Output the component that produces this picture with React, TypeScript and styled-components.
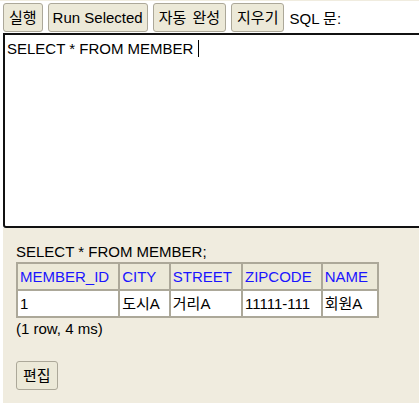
import React from "react";
import styled, { createGlobalStyle } from "styled-components";

const Global = createGlobalStyle`
  html, body { margin: 0; padding: 0; background: #fff; }
  body {
    font-family: "Liberation Sans", "Noto Sans CJK KR", Arial, sans-serif;
    font-size: 15px;
    color: #000;
    overflow: hidden;
  }
`;

const Page = styled.div`
  display: flex;
  flex-direction: column;
  width: 419px;
  height: 403px;
  overflow: hidden;
`;

const Toolbar = styled.div`
  display: flex;
  align-items: center;
  gap: 5px;
  height: 33px;
  padding: 1px 3px 0;
  border-top: 1px solid #f0ecdf;
  box-sizing: border-box;
`;

const Button = styled.button<{ $pad?: number; $ws?: number }>`
  height: 29px;
  padding: 0 ${(p) => p.$pad ?? 4}px;
  margin: 0;
  background: #ece9d8;
  border: 1px solid #aca899;
  border-radius: 3px;
  font-family: inherit;
  font-size: 15px;
  word-spacing: ${(p) => p.$ws ?? 0}px;
  color: #000;
  line-height: 1;
  cursor: pointer;
`;

const Label = styled.span`
  white-space: nowrap;
`;

const Editor = styled.div`
  margin-left: 3px;
  width: 430px;
  height: 195px;
  box-sizing: border-box;
  border: 2px solid #111;
  border-bottom-left-radius: 3px;
  padding: 5px 2px;
  white-space: pre;
  line-height: 17px;
`;

const Caret = styled.span`
  display: inline-block;
  width: 1px;
  height: 17px;
  background: #000;
  vertical-align: -3px;
`;

const Results = styled.div`
  flex: 1;
  margin-left: 3px;
  background: #f0ecdf;
  padding: 15px 13px 0;
`;

const Query = styled.div`
  line-height: 18px;
  margin-bottom: 1px;
`;

const Table = styled.table`
  border-collapse: separate;
  border-spacing: 0;
  border: 1px solid #aca899;
`;

const Th = styled.th`
  background: #ece9d8;
  color: #1a14ff;
  font-weight: normal;
  text-align: left;
  border: 1px solid #aca899;
  padding: 4px 9px 4px 2px;
  line-height: 17px;
`;

const Td = styled.td`
  background: #fff;
  border: 1px solid #aca899;
  padding: 4px 9px 4px 2px;
  line-height: 17px;
`;

const Status = styled.div`
  margin-top: 2px;
  line-height: 18px;
`;

const EditButton = styled(Button)`
  margin-top: 23px;
`;

const columns = ["MEMBER_ID", "CITY", "STREET", "ZIPCODE", "NAME"];
const rows = [["1", "도시A", "거리A", "11111-111", "회원A"]];

export default function App() {
  return (
    <>
      <Global />
      <Page>
        <Toolbar>
          <Button $pad={5}>실행</Button>
          <Button $pad={4}>Run Selected</Button>
          <Button $pad={5} $ws={2}>자동 완성</Button>
          <Button $pad={5}>지우기</Button>
          <Label>SQL 문:</Label>
        </Toolbar>
        <Editor>
          SELECT * FROM MEMBER <Caret />
        </Editor>
        <Results>
          <Query>SELECT * FROM MEMBER;</Query>
          <Table>
            <thead>
              <tr>
                {columns.map((c) => (
                  <Th key={c}>{c}</Th>
                ))}
              </tr>
            </thead>
            <tbody>
              {rows.map((r, i) => (
                <tr key={i}>
                  {r.map((v, j) => (
                    <Td key={j}>{v}</Td>
                  ))}
                </tr>
              ))}
            </tbody>
          </Table>
          <Status>(1 row, 4 ms)</Status>
          <EditButton $pad={6}>편집</EditButton>
        </Results>
      </Page>
    </>
  );
}
